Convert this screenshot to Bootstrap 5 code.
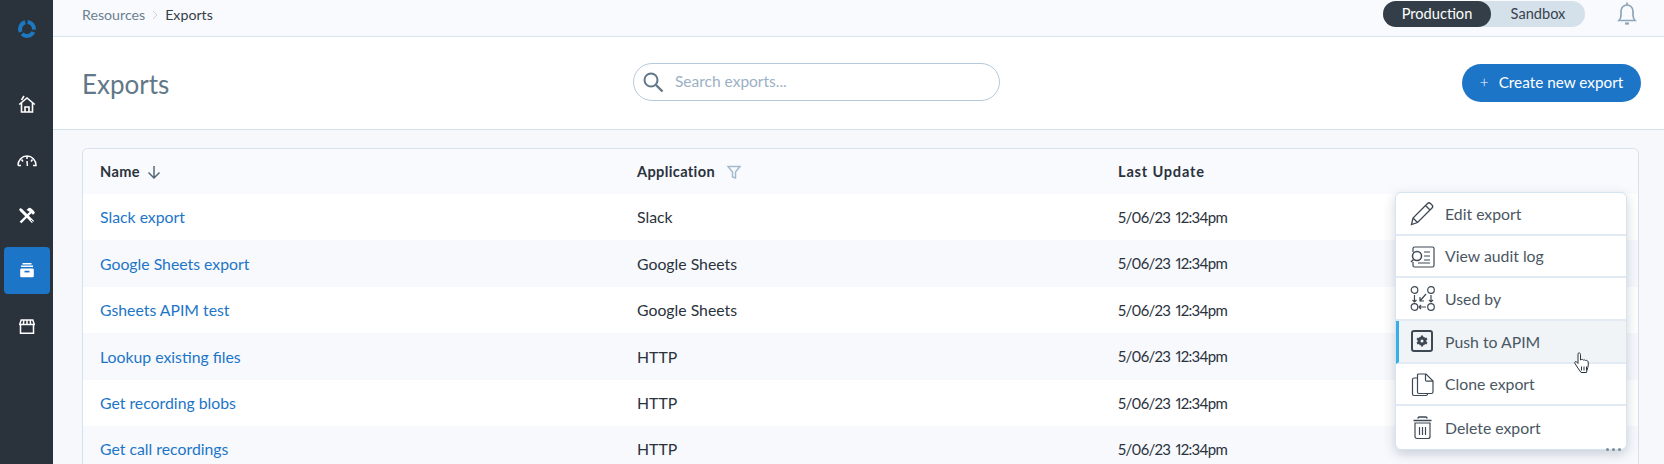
<!doctype html>
<html lang="en">
<head>
<meta charset="utf-8">
<title>Exports</title>
<link href="https://cdn.jsdelivr.net/npm/bootstrap@5.3.0/dist/css/bootstrap.min.css" rel="stylesheet">
<style>
html,body{height:464px;overflow:hidden}
body{font-family:"Lato","Liberation Sans",sans-serif;font-size:15.8px;color:#2a323c;background:#f6f8fc}
.shell{height:464px}
.rail{width:53px;flex:none;background:#2a323c}
.rail-logo{height:58px;flex:none}
.rail-gap{height:22px;flex:none}
.rail-item{width:46px;height:47px;flex:none;margin:0 auto;border-radius:4px;color:#fff}
.rail-item.on{background:#1d75c7}
.rail-s2{margin-top:10px}
.rail-s3{margin-top:8px}
.rail-s4{margin-top:8px}
.rail-s5{margin-top:9px}
.topbar{height:37px;flex:none;background:#f9fafe;border-bottom:1px solid #d5e4ee;padding:1px 27px 0 29px}
.crumb{font-size:14.2px;color:#6b7f8f;height:27px}
.crumb b{font-weight:400;color:#333e48}
.crumb svg{margin:0 6px 0 7px}
.envs{background:#d5e1ea;border-radius:14px;height:26px;width:202px;margin-right:32px;font-size:14.6px;color:#38434e}
.env-on{background:#333e48;color:#fff;width:108px;border-radius:14px;height:26px}
.env-off{flex:1}
.head{height:93px;flex:none;background:#fff;border-bottom:1px solid #d5e1ec;padding:0 23px 0 29px;position:relative}
.title{font-size:26px;font-weight:400;color:#627888;margin:3px 0 0}
.finder{position:absolute;left:580px;top:26px;width:367px;height:38px;border:1px solid #b5c9dc;border-radius:19px;padding-left:8px}
.finder input{border:0;outline:0;background:none;flex:1;font-family:inherit;font-size:15.5px;margin-left:9px}
.finder input::placeholder{color:#9bb0c4;opacity:1}
.make{background:#1d75c7;color:#fff;border:0;border-radius:19px;height:38px;width:179px;font-size:15.3px;margin-top:-1px}
.make span{margin-right:10px;font-weight:300}
.sheet{margin:18px 25px 0 29px;flex:none;background:#fff;border:1px solid #d5e1ec;border-bottom:0;border-radius:6px 6px 0 0;position:relative;overflow:hidden}
.grid{table-layout:fixed;width:100%;margin:0}
.grid th,.grid td{padding:0 0 0 17px;height:46.4px;vertical-align:middle;border:0;background:transparent;color:#2a323c}
.grid th{height:45px;font-weight:700;font-size:14.6px;letter-spacing:.35px;background:#f8fafe}
.grid th.wide-head{letter-spacing:.8px}
.grid tbody tr:nth-child(even) td{background:#f7f9fd}
.grid a{color:#1d75c7;text-decoration:none}
.grid th svg{margin-left:7px;vertical-align:-2px}
.grid th svg.gap-fn{margin-left:12px}
.grid td.stamp{font-size:15px;letter-spacing:-.7px;word-spacing:2px;font-variant-numeric:proportional-nums}
.flyout{position:absolute;left:1395px;top:192px;width:232px;background:#fff;border:1px solid #d5e4ee;border-radius:6px;box-shadow:0 4px 12px rgba(60,80,100,.25);z-index:5;overflow:hidden}
.fly-row{height:42.7px;padding-left:14px;gap:10px;border-bottom:2px solid #e2ebf3;color:#4a5763;font-size:15.8px}
.fly-row:last-child{border-bottom:0}
.fly-row.on{background:#f0f4f7;border-left:3px solid #37aee5;padding-left:11px}
.fly-row svg{flex:none}
.dots{position:absolute;left:1606px;top:448px;z-index:6;gap:3px}
.dots i{width:3px;height:3px;border-radius:50%;background:#7b8c9a;display:block}
.hand{position:absolute;left:1574px;top:352px;z-index:7}
</style>
</head>
<body>
<div class="shell d-flex">
  <nav class="rail d-flex flex-column">
    <div class="rail-logo d-flex align-items-center justify-content-center">
      <svg width="20" height="20" viewBox="0 0 20 20" fill="none" stroke="#1c78c0" stroke-width="4"><path d="M10.600 3A7 7 0 0 1 17 10.600"/><path d="M16.300 13A7 7 0 0 1 5.050 14.950"/><path d="M3.660 12.960A7 7 0 0 1 8.200 3.240"/></svg>
    </div>
    <div class="rail-gap"></div>
    <div class="rail-item d-flex align-items-center justify-content-center">
      <svg width="18" height="18" viewBox="0 0 18 18" fill="none" stroke="#fff" stroke-width="1.600"><path d="M1.200 9.500 9 3l7.800 6.500M3.500 8v9h11V8M7 17v-5h4v5M3.500 5 6 1"/></svg>
    </div>
    <div class="rail-item rail-s2 d-flex align-items-center justify-content-center">
      <svg width="20" height="14" viewBox="0 0 20 14" fill="none" stroke="#fff" stroke-width="1.500"><path d="M1 11.500C1 6 5 2 10 2s9 4 9 9.500h-3M1 11.500h3M10 2v3M10 7l.4 5M4.500 5.500l1.500 2M15.500 5.500l-1.500 2"/></svg>
    </div>
    <div class="rail-item rail-s3 d-flex align-items-center justify-content-center">
      <svg width="18" height="18" viewBox="0 0 18 18" fill="none" stroke="#fff" stroke-width="1.800"><path d="M2.500 2.500 15 15" stroke-width="3"/><path d="M14 4 2.500 15.500" stroke-width="2.400"/><path d="M8.500 3 11 .8c2 0 4.500 2 6 5l-2 2-2.500-2.500z" fill="#fff" stroke="none"/><path d="M1 2.500 2.500 1 5 3.500 3.500 5z" fill="#fff" stroke="none"/><path d="M13 13l3 3" stroke="#2a323c" stroke-width=".8"/></svg>
    </div>
    <div class="rail-item rail-s4 on d-flex align-items-center justify-content-center">
      <svg width="16" height="15" viewBox="0 0 16 15" fill="none" stroke="#fff" stroke-width="1.400"><path d="M3.500 .8h9M2 3.200h12"/><rect x="1.200" y="5.500" width="13.600" height="8.700" rx="1.300" fill="#fff" stroke="none"/><path d="M5.500 8.600h5" stroke="#1d75c7" stroke-width="1.700"/></svg>
    </div>
    <div class="rail-item rail-s5 d-flex align-items-center justify-content-center">
      <svg width="16" height="15" viewBox="0 0 16 15" fill="none" stroke="#fff" stroke-width="1.500"><path d="M2.200 1h11.600L15.300 5.400H.7z"/><path d="M4.800 1 4.400 5.400M8 1v4.400M11.200 1l.4 4.400"/><path d="M1.500 5.400v8.800h13V5.400"/></svg>
    </div>
  </nav>
  <main class="flex-grow-1 d-flex flex-column">
    <header class="topbar d-flex align-items-start justify-content-between">
      <div class="crumb d-flex align-items-center"><span>Resources</span><svg width="7" height="10" viewBox="0 0 7 10" fill="none" stroke="#c5d3de" stroke-width="1"><path d="M1 1l4 4-4 4"/></svg><b>Exports</b></div>
      <div class="d-flex align-items-center">
        <div class="envs d-flex align-items-center">
          <div class="env-on d-flex align-items-center justify-content-center">Production</div>
          <div class="env-off text-center">Sandbox</div>
        </div>
        <svg width="20" height="24" viewBox="0 0 20 24" fill="none" stroke="#8da4b8" stroke-width="1.700"><path d="M2 18.500c1.500-1.500 2-3 2-5.500V9a6 6 0 0 1 12 0v4c0 2.500.5 4 2 5.500z"/><path d="M10 .5v2.500"/><path d="M8 21.500h4" stroke-width="2.200"/></svg>
      </div>
    </header>
    <section class="head d-flex align-items-center justify-content-between">
      <h1 class="title">Exports</h1>
      <div class="finder d-flex align-items-center">
        <svg width="22" height="22" viewBox="0 0 22 22" fill="none" stroke="#627888" stroke-width="2"><circle cx="9" cy="9" r="6.500"/><path d="M14 14l6.500 6.500" stroke-width="2.400"/></svg>
        <input type="text" placeholder="Search exports...">
      </div>
      <button class="btn make d-flex align-items-center justify-content-center" type="button"><span>+</span>Create new export</button>
    </section>
    <div class="sheet">
      <table class="table grid">
        <colgroup><col style="width:537px"><col style="width:481px"><col></colgroup>
        <thead><tr>
          <th>Name<svg width="14" height="14" viewBox="0 0 14 14" fill="none" stroke="#546878" stroke-width="1.500"><path d="M7 1v12M1.500 7.500 7 13l5.500-5.500"/></svg></th>
          <th>Application<svg class="gap-fn" width="14" height="14" viewBox="0 0 14 14" fill="none" stroke="#a3bacd" stroke-width="1.500"><path d="M1 1.500h12L8.500 7v6l-3-1V7z"/></svg></th>
          <th class="wide-head">Last Update</th>
        </tr></thead>
        <tbody>
          <tr><td><a href="#">Slack export</a></td><td>Slack</td><td class="stamp">5/06/23 12:34pm</td></tr>
          <tr><td><a href="#">Google Sheets export</a></td><td>Google Sheets</td><td class="stamp">5/06/23 12:34pm</td></tr>
          <tr><td><a href="#">Gsheets APIM test</a></td><td>Google Sheets</td><td class="stamp">5/06/23 12:34pm</td></tr>
          <tr><td><a href="#">Lookup existing files</a></td><td>HTTP</td><td class="stamp">5/06/23 12:34pm</td></tr>
          <tr><td><a href="#">Get recording blobs</a></td><td>HTTP</td><td class="stamp">5/06/23 12:34pm</td></tr>
          <tr><td><a href="#">Get call recordings</a></td><td>HTTP</td><td class="stamp">5/06/23 12:34pm</td></tr>
        </tbody>
      </table>
    </div>
  </main>
</div>
<div class="dots d-flex"><i></i><i></i><i></i></div>
<div class="flyout">
  <div class="fly-row d-flex align-items-center">
    <svg width="25" height="25" viewBox="0 0 25 25" fill="none" stroke="#3d4853" stroke-width="1.300"><path d="M1.500 23.500 3 17 17.500 2.500c1-1 2-1 3 0l1.500 1.500c1 1 1 2 0 3L7.500 21.500zM3 17l4.500 4.500M15.500 4.500 20 9"/></svg>
    <span>Edit export</span>
  </div>
  <div class="fly-row d-flex align-items-center">
    <svg width="25" height="25" viewBox="0 0 25 25" fill="none" stroke="#3d4853" stroke-width="1.200"><path d="M3 8V4.500C3 3.500 3.700 3 4.500 3h18C23.500 3 24 3.500 24 4.500v17c0 1-.5 1.500-1.500 1.500h-18C3.500 23 3 22.500 3 21.500V18"/><circle cx="7" cy="12" r="4.500" stroke-width="1.500"/><path d="M3.500 15.500 1 18" stroke-width="1.500"/><path d="M14 8h6M14 12h6M14 16h6M8 19h12"/></svg>
    <span>View audit log</span>
  </div>
  <div class="fly-row d-flex align-items-center">
    <svg width="25" height="25" viewBox="0 0 25 25" fill="none" stroke="#3d4853" stroke-width="1.200"><circle cx="4.500" cy="4" r="3.300"/><circle cx="21" cy="4" r="3.300"/><circle cx="4.500" cy="21" r="3.300"/><circle cx="21" cy="21" r="3.300"/><path d="M4.500 9v7M2.500 14l2 2 2-2M21 9v7M19 14l2 2 2-2M16 8l-6 7M10 11v4h4M16 21H9M11 19l-2 2 2 2"/></svg>
    <span>Used by</span>
  </div>
  <div class="fly-row on d-flex align-items-center">
    <svg width="25" height="25" viewBox="0 0 25 25" fill="none"><rect x="2" y="2" width="20" height="20" rx="2" stroke="#3d4853" stroke-width="2"/><circle cx="12" cy="12" r="3" stroke="#3d4853" stroke-width="3"/><path d="M12 6.500v2M12 15.500v2M7 9.500l2 1M15 13.500l2 1M7 14.500l2-1M15 10.500l2-1" stroke="#3d4853" stroke-width="2"/></svg>
    <span>Push to APIM</span>
  </div>
  <div class="fly-row d-flex align-items-center">
    <svg width="25" height="25" viewBox="0 0 25 25" fill="none" stroke="#3d4853" stroke-width="1.200"><path d="M8.500 2H16l7 7v11c0 1-.5 1.500-1.500 1.500H9c-1 0-1.500-.5-1.500-1.500V3c0-.7.300-1 1-1z"/><path d="M15.500 2v6c0 .8.500 1.200 1.200 1.200H23"/><path d="M7.500 6H4c-1 0-1.500.5-1.500 1.500V22c0 1 .5 1.500 1.500 1.500h12c1 0 1.500-.5 1.500-1.500v-.5"/></svg>
    <span>Clone export</span>
  </div>
  <div class="fly-row d-flex align-items-center">
    <svg width="25" height="25" viewBox="0 0 25 25" fill="none" stroke="#3d4853" stroke-width="1.200"><path d="M3.500 5.500h18M8 3.500c0-1 .5-1.500 1.500-1.500h6c1 0 1.500.5 1.500 1.500" stroke-width="1.600"/><path d="M5 8h15v13.500c0 1.200-.8 2-2 2H7c-1.200 0-2-.8-2-2zM9.500 12v8M12.500 12v8M15.500 12v8"/></svg>
    <span>Delete export</span>
  </div>
</div>
<svg class="hand" width="17" height="22" viewBox="0 0 17 22"><path d="M4 1.500c1-1 2.500-.5 2.500 1V8l1-.5c.8-.3 1.500 0 2 .6.800-.4 1.600-.2 2 .4.900-.4 2 0 2.500 1 .5 1.500.5 5-1 8.500l-.5 2.500H7L2.500 14 .8 11c-.5-1 .8-2 1.700-1.200L4 11.500z" fill="#fff" stroke="#2a323c" stroke-width="1"/><path d="M7.500 14.500v4M10 14.500v4M12.500 14.500v4" stroke="#2a323c"/></svg>
<script src="https://cdn.jsdelivr.net/npm/bootstrap@5.3.0/dist/js/bootstrap.bundle.min.js"></script>
</body>
</html>
